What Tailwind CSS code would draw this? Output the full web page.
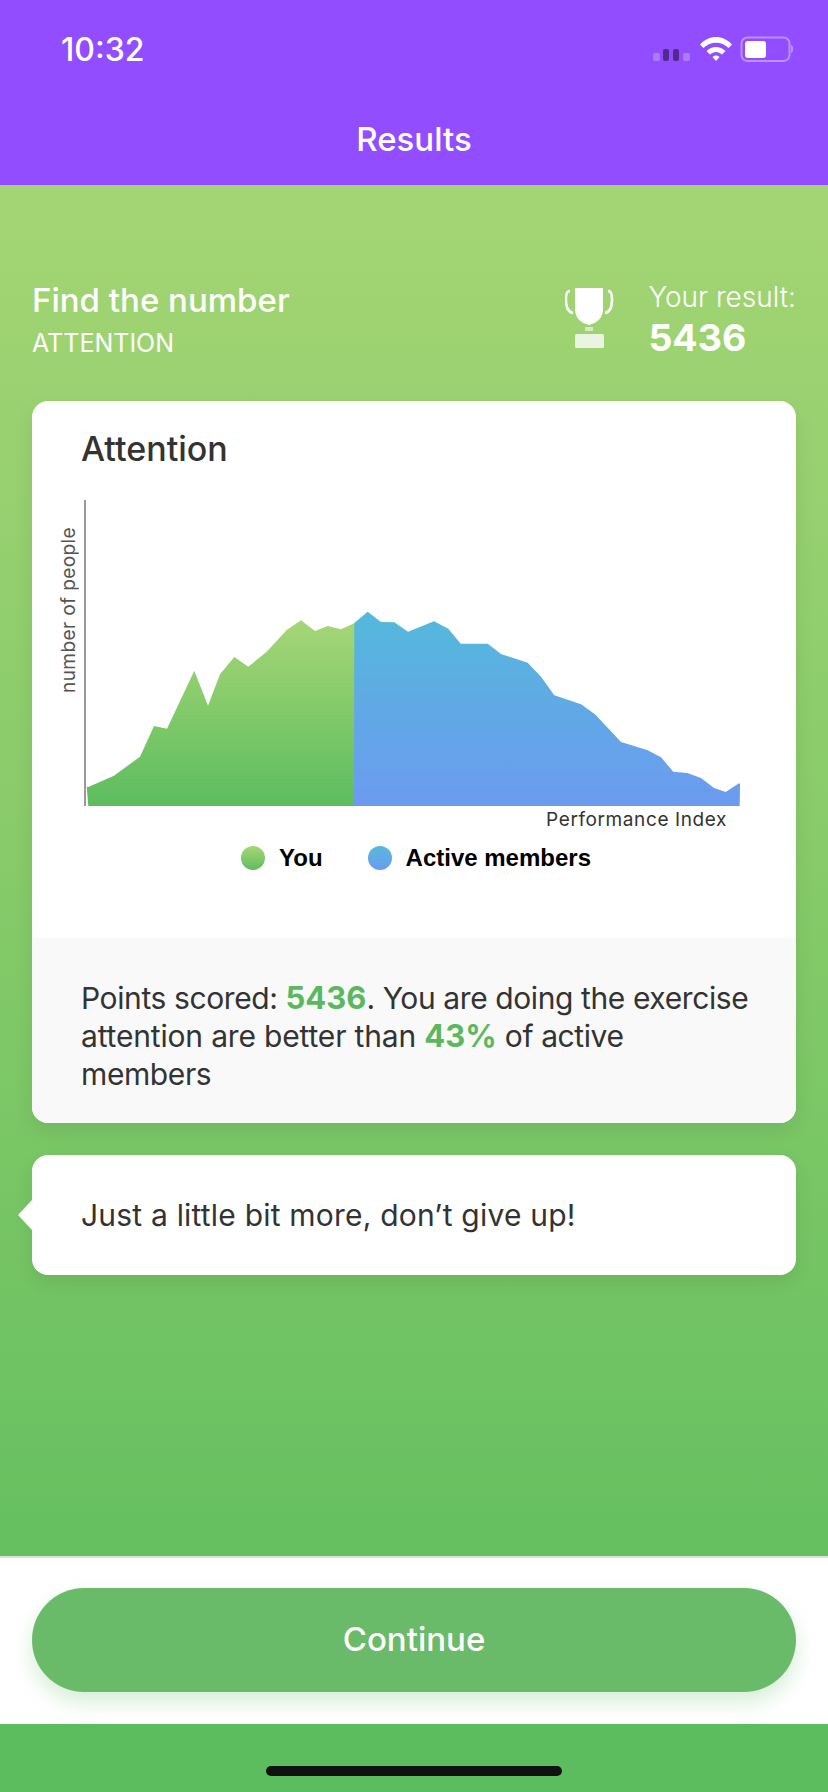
<!DOCTYPE html>
<html lang="en">
<head>
<meta charset="utf-8">
<title>Results</title>
<script src="https://cdn.jsdelivr.net/npm/@tailwindcss/browser@4"></script>
</head>
<body class="m-0">
<div class="flex h-[1792px] w-[828px] flex-col overflow-hidden font-['Inter',sans-serif] text-white">
  <header class="h-[185px] shrink-0 bg-[#914dff]">
    <div class="flex h-[100px] items-center justify-between pl-[61px]">
      <span class="text-[32px] leading-none font-medium">10:32</span>
      <svg class="h-[60px] w-[178px]" viewBox="650 20 178 60" aria-hidden="true">
        <rect x="653" y="53" width="7" height="8" rx="2" fill="#ad7bff"/>
        <rect x="663" y="49" width="6" height="12" rx="2" fill="#4f2a8f"/>
        <rect x="673" y="49" width="6" height="12" rx="2" fill="#4f2a8f"/>
        <rect x="683" y="53" width="7" height="8" rx="2" fill="#ad7bff"/>
        <path d="M700 44.5C709 34.500 723 34.500 732 44.500L728.500 48C721.500 41 710.500 41 703.500 48Z" fill="#fff"/>
        <path d="M706.500 51C712 45.500 720 45.500 725.500 51L722 54.500C718.500 51 713.500 51 710 54.500Z" fill="#fff"/>
        <path d="M712.500 57C714.500 55 717.500 55 719.500 57L716 61Z" fill="#fff"/>
        <rect x="741.500" y="37.500" width="48" height="23.500" rx="6" fill="none" stroke="#bc90ff" stroke-width="2"/>
        <rect x="745" y="41" width="21" height="17" rx="3" fill="#fff"/>
        <path d="M791 45C794 46 794 52 791 53Z" fill="#bc90ff"/>
      </svg>
    </div>
    <h1 class="flex h-[80px] items-center justify-center text-[33px] font-medium">Results</h1>
  </header>

  <div class="flex min-h-0 flex-1 flex-col bg-linear-to-b from-[#a4d574] to-[#59bc5c]">
    <main class="flex-1 px-[32px]">
      <section class="flex h-[216px] items-start justify-between pt-[96px]">
        <div>
          <h2 class="text-[33px] leading-[38px] font-medium">Find the number</h2>
          <p class="mt-[9px] text-[25px] leading-[30px]">ATTENTION</p>
        </div>
        <div class="flex items-start">
          <svg class="mt-[7px] h-[60px] w-[50px]" viewBox="565 288 50 60" aria-hidden="true">
            <path d="M575 288H603V309C603 318 597 323 589 325C581 323 575 318 575 309Z" fill="#fff"/>
            <path d="M570 291C565.500 291 565.500 299 566.500 305C567 309 569 312 573 313" fill="none" stroke="#fff" stroke-width="2.500"/>
            <path d="M608 291C612.500 291 612.500 299 611.500 305C611 309 609 312 605 313" fill="none" stroke="#fff" stroke-width="2.500"/>
            <rect x="585" y="327" width="8" height="4" fill="#fff" fill-opacity="0.55"/>
            <rect x="575" y="334" width="29" height="14" rx="1.500" fill="#fff" fill-opacity="0.78"/>
          </svg>
          <div class="ml-[33px] pt-px">
            <p class="text-[28px] leading-[30px] font-light">Your result:</p>
            <p class="mt-[4px] text-[37.5px] leading-[44px] font-bold">5436</p>
          </div>
        </div>
      </section>

      <article class="overflow-hidden rounded-[16px] bg-white shadow-[0_8px_20px_rgba(0,0,0,0.08)]">
        <div class="h-[537px] pt-[29px]">
          <h3 class="pl-[49px] text-[34px] leading-[38px] font-medium text-[#333]">Attention</h3>
          <div class="mt-[32px] flex pl-[24px]">
            <div class="w-[28px] pt-[27px]">
              <span class="block rotate-180 text-[19px] leading-[26px] tracking-[0.4px] text-[#555] [writing-mode:vertical-rl]">number of people</span>
            </div>
            <svg class="h-[308px] w-[660px]" viewBox="84 500 660 308" aria-label="Distribution chart">
              <defs>
                <linearGradient id="g" x1="0" y1="0" x2="0" y2="1">
                  <stop offset="0" stop-color="#a6d676"/>
                  <stop offset="1" stop-color="#5cbd5e"/>
                </linearGradient>
                <linearGradient id="b" x1="0" y1="0" x2="0" y2="1">
                  <stop offset="0" stop-color="#54b9db"/>
                  <stop offset="1" stop-color="#6c9af0"/>
                </linearGradient>
              </defs>
              <line x1="85" y1="500" x2="85" y2="806" stroke="#999" stroke-width="2"/>
              <polygon fill="url(#b)" points="354,623.300 367.700,611.700 381,622 394.300,622.300 408,631.700 434,621.300 448.300,628.700 460.700,643.700 487.700,643.700 501,654 527.700,662.700 541,676.700 554.300,695.300 581,704.300 595,714.300 621,742 647.700,750.300 661,757.300 673.300,771.700 687.300,773 701,778 714,788 725.700,792 739,783.300 740,784 739.700,806 354,806"/>
              <polygon fill="url(#g)" points="86.700,786.700 88.300,787 114,775.700 140,756.700 154,726 167,728.700 194.300,670.700 208,705.700 220,674.300 234.300,657 248.300,666.700 266.700,651.700 286.700,630 301,620.300 315,631 327.700,626 341,629.300 354.300,623.300 354,806 88.300,806"/>
            </svg>
          </div>
          <p class="pt-px pr-[69px] text-right text-[19px] leading-[22px] tracking-[0.6px] text-[#333]">Performance Index</p>
          <div class="mt-[15px] flex items-center justify-center pl-[4px] font-['Liberation_Sans',sans-serif] text-[24px] leading-[24px] font-bold text-black">
            <span class="size-[24px] rounded-full bg-linear-to-b from-[#a6d676] to-[#5cbd5e]"></span>
            <span class="ml-[14px]">You</span>
            <span class="ml-[45px] size-[24px] rounded-full bg-linear-to-b from-[#54b9db] to-[#6c9af0]"></span>
            <span class="ml-[14px]">Active members</span>
          </div>
        </div>
        <p class="h-[185px] bg-[#f9f9f9] pt-[41px] pl-[49px] text-[30px] leading-[38px] tracking-[-0.4px] whitespace-nowrap text-[#333]">Points scored: <b class="text-[31px] font-bold tracking-normal text-[#5cb85f]">5436</b>. You are doing the exercise<br><span class="tracking-[-0.17px]">attention are better than </span><b class="text-[31px] font-bold tracking-normal text-[#5cb85f]">43%</b> of active<br>members</p>
      </article>

      <aside class="relative mt-[32px] flex h-[120px] items-center rounded-[16px] bg-white px-[49px] shadow-[0_8px_20px_rgba(0,0,0,0.08)]">
        <svg class="absolute top-[45px] -left-[14px] h-[30px] w-[14px]" viewBox="0 0 14 30" aria-hidden="true"><polygon points="14,0 0,15 14,30" fill="#fff"/></svg>
        <p class="text-[30px] leading-[38px] tracking-[0.2px] text-[#333]">Just a little bit more, don’t give up!</p>
      </aside>
    </main>

    <footer class="h-[168px] shrink-0 border-t-2 border-[#ddd] bg-white px-[32px] pt-[30px]">
      <button class="flex h-[104px] w-full items-center justify-center rounded-full bg-[#6abb69] text-[33px] font-medium text-white shadow-[0_10px_20px_rgba(92,189,94,0.25)]">Continue</button>
    </footer>
    <div class="flex h-[68px] shrink-0 justify-center bg-[#5cbd5e] pt-[42px]">
      <span class="h-[10px] w-[296px] rounded-full bg-[#111]"></span>
    </div>
  </div>
</div>
</body>
</html>
